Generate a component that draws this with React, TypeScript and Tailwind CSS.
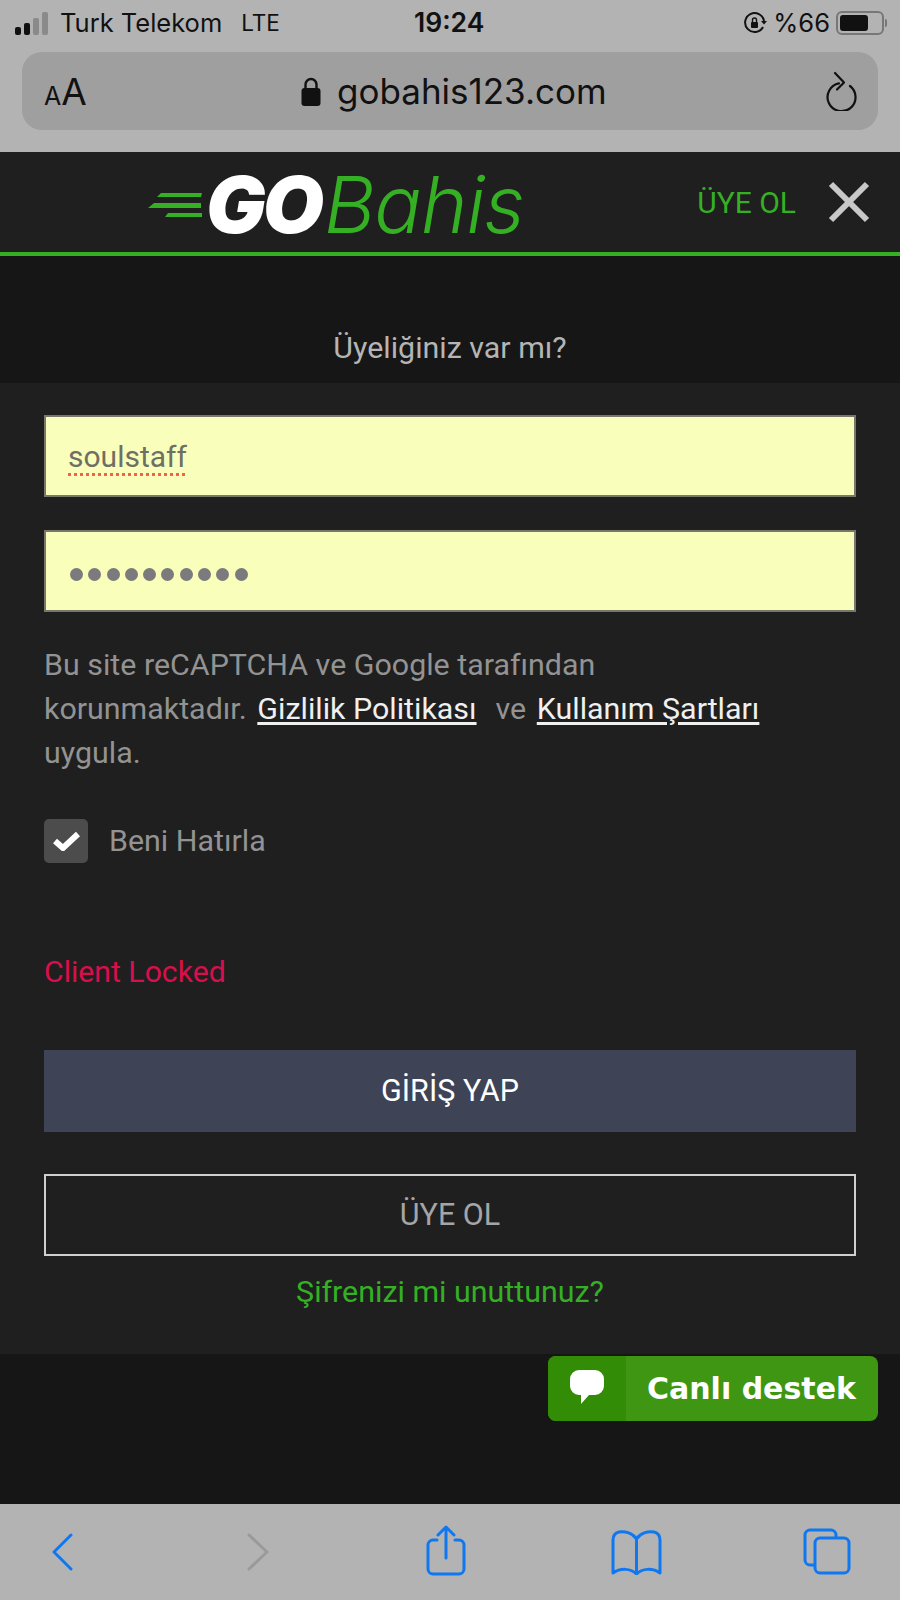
const roboto = { fontFamily: 'Roboto, sans-serif' };

function StatusBar() {
  return (
    <div className="relative flex h-[52px] items-center pb-[6px] pl-[15px] pr-[13px] text-[25.5px] text-[#111]">
      <div className="flex items-end gap-[3px]">
        <span className="h-[8px] w-[6px] rounded-[2px] bg-[#111]" />
        <span className="h-[12px] w-[6px] rounded-[2px] bg-[#111]" />
        <span className="h-[17px] w-[6px] rounded-[2px] bg-[#8a8a8a]" />
        <span className="h-[23px] w-[6px] rounded-[2px] bg-[#8a8a8a]" />
      </div>
      <span className="ml-[12px]">Turk Telekom</span>
      <span className="ml-[19px] text-[22.5px]">LTE</span>
      <span className="absolute left-[414px] text-[26.5px] font-semibold">19:24</span>
      <div className="ml-auto flex items-center gap-[6px]">
        <svg width="24" height="24" viewBox="0 0 24 24" fill="none" stroke="#111" strokeWidth="2">
          <path d="M20 16a9.5 9.5 0 1 1 1-6" />
          <path d="M18 10h6l-3 3.5z" fill="#111" stroke="none" />
          <rect x="8" y="11" width="7" height="6" rx="1" fill="#111" stroke="none" />
          <path d="M9.5 11V9a2 2 0 0 1 4 0v2" strokeWidth="1.4" />
        </svg>
        <span>%66</span>
        <div className="flex items-center">
          <div className="flex h-[24px] w-[48px] items-center rounded-[6px] border-2 border-[#777] p-[2px]">
            <div className="h-full w-[28px] rounded-[3px] bg-[#111]" />
          </div>
          <div className="ml-[1px] h-[8px] w-[2px] rounded-r bg-[#777]" />
        </div>
      </div>
    </div>
  );
}

function UrlBar() {
  return (
    <div className="mx-[22px] flex h-[78px] items-center rounded-[20px] bg-[#9f9f9f] pl-[22px] pr-[21px] text-[#111]">
      <span className="flex w-[257px] items-baseline text-[37px] leading-none">
        <span className="text-[25px]">A</span>A
      </span>
      <svg width="20" height="29" viewBox="0 0 20 29" fill="none">
        <path d="M4.5 13V7.5a5.5 5.5 0 0 1 11 0V13" stroke="#111" strokeWidth="2.4" />
        <rect x="0.5" y="11" width="19" height="18" rx="3" fill="#111" />
      </svg>
      <span className="ml-[16px] text-[35px] leading-none">gobahis123.com</span>
      <svg className="ml-auto" width="34" height="40" viewBox="0 0 34 40" fill="none" stroke="#111" strokeWidth="2.2" strokeLinecap="round" strokeLinejoin="round">
        <path d="M27 15a14 14 0 1 1-11-2.6" />
        <path d="M12 2l9 9.5-7 7" />
      </svg>
    </div>
  );
}

function Logo() {
  return (
    <div className="mt-[5px] flex items-center">
      <svg width="55" height="26" viewBox="0 0 55 26" className="mt-[2px]">
        <path d="M13 0h41l-1 4H9z" fill="#35b024" />
        <path d="M6 10h47v5H0z" fill="#35b024" />
        <path d="M20 20h34v4H17z" fill="#35b024" />
      </svg>
      <span className="ml-[3px] text-[79px] font-black italic leading-none tracking-[-3px] text-white">
        GO
      </span>
      <span className="ml-[3px] text-[79px] font-light italic leading-none tracking-[-1px] text-[#35b024]">
        Bahis
      </span>
    </div>
  );
}

export default function App() {
  return (
    <div className="relative flex h-[1600px] w-[900px] flex-col overflow-hidden bg-[#b3b3b3]" style={{ fontFamily: 'Inter, sans-serif' }}>
      <StatusBar />
      <UrlBar />

      <header className="mt-[22px] flex h-[104px] items-center border-b-4 border-[#35b024] bg-[#1f1f1f] pl-[148px] pr-[30px]">
        <Logo />
        <span className="ml-auto text-[30px] text-[#35b024]" style={roboto}>ÜYE OL</span>
        <svg className="ml-[32px]" width="42" height="42" viewBox="0 0 42 42" stroke="#c8c8c8" strokeWidth="6">
          <path d="M3 3l36 36M39 3L3 39" />
        </svg>
      </header>

      <div className="flex h-[127px] items-end justify-center bg-[#161616] pb-[12px] text-[30.4px] text-[#b5b5b5]" style={roboto}>
        Üyeliğiniz var mı?
      </div>

      <main className="flex h-[971px] flex-col bg-[#1f1f1f] px-[44px] pt-[32px]" style={roboto}>
        <div className="flex h-[82px] items-center border-2 border-[#77776b] bg-[#f9ffbb] pl-[22px] text-[30px] text-[#6f6f66]">
          <span className="underline decoration-[#f4614a] decoration-dotted decoration-[3px] underline-offset-[6px]">soulstaff</span>
        </div>
        <div className="mt-[33px] flex h-[82px] items-center gap-[5.3px] border-2 border-[#77776b] bg-[#f9ffbb] pl-[24px] pt-[6px]">
          {Array.from({ length: 10 }).map((_, i) => (
            <span key={i} className="h-[13px] w-[13px] rounded-full bg-[#7b7a7c]" />
          ))}
        </div>

        <p className="mt-[31px] w-[800px] text-[30.4px] leading-[44px] text-[#939393]">
          Bu site reCAPTCHA ve Google tarafından
          <br />
          korunmaktadır. <a className="ml-[3px] text-[#f0f0f0] underline underline-offset-3">Gizlilik Politikası</a>
          <span className="ml-[19px]">ve</span> <a className="ml-[3px] text-[#f0f0f0] underline underline-offset-3">Kullanım Şartları</a>
          <br />
          uygula.
        </p>

        <div className="mt-[43px] flex items-center">
          <div className="flex h-[44px] w-[44px] items-center justify-center rounded-[5px] bg-[#4c4c4c]">
            <svg width="27" height="20" viewBox="0 0 27 20" fill="none" stroke="white" strokeWidth="6">
              <path d="M2 10l8 7L25 3" />
            </svg>
          </div>
          <span className="ml-[21px] text-[30.4px] text-[#939393]">Beni Hatırla</span>
        </div>

        <p className="mt-[86px] text-[30.2px] leading-[44px] text-[#d80f4d]">Client Locked</p>

        <button className="mt-[56px] h-[82px] w-full bg-[#3e4355] text-[30.5px] text-white">GİRİŞ YAP</button>
        <button className="mt-[42px] h-[82px] w-full border-2 border-[#cfcfcf] text-[30.5px] text-[#a5a5a5]">ÜYE OL</button>
        <p className="mt-[16px] text-center text-[30.4px] leading-[40px] text-[#35b024]">Şifrenizi mi unuttunuz?</p>
      </main>

      <div className="h-[150px] bg-[#161616]" />

      <footer className="flex h-[96px] items-start bg-[#b3b3b3]">
        <svg className="ml-[52px] mt-[29px]" width="21" height="38" viewBox="0 0 21 38" fill="none" stroke="#0f78f0" strokeWidth="3" strokeLinecap="round" strokeLinejoin="round">
          <path d="M19 2L2 19l17 17" />
        </svg>
        <svg className="ml-[174px] mt-[29px]" width="22" height="38" viewBox="0 0 22 38" fill="none" stroke="#9a9a9a" strokeWidth="3" strokeLinecap="round" strokeLinejoin="round">
          <path d="M2 2l18 17L2 36" />
        </svg>
        <svg className="ml-[157px] mt-[21px]" width="40" height="51" viewBox="0 0 40 51" fill="none" stroke="#0f78f0" strokeWidth="3" strokeLinecap="round" strokeLinejoin="round">
          <path d="M11 15H7a5 5 0 0 0-5 5v24a5 5 0 0 0 5 5h26a5 5 0 0 0 5-5V20a5 5 0 0 0-5-5h-4" />
          <path d="M20 33V2M12 10l8-8 8 8" />
        </svg>
        <svg className="ml-[145px] mt-[26px]" width="51" height="45" viewBox="0 0 51 45" fill="none" stroke="#0f78f0" strokeWidth="3" strokeLinecap="round" strokeLinejoin="round">
          <path d="M25.5 9C22 3 14 1 8 2 4 3 2 6 2 10v33c7-5 18-5 23.5 1C31 38 42 38 49 43V10c0-4-2-7-6-8-6-1-14 1-17.5 7z" />
          <path d="M25.5 9v35" />
        </svg>
        <svg className="ml-[141px] mt-[24px]" width="48" height="47" viewBox="0 0 48 47" fill="none" stroke="#0f78f0" strokeWidth="3" strokeLinejoin="round">
          <path d="M11 37H7a5 5 0 0 1-5-5V7a5 5 0 0 1 5-5h21a5 5 0 0 1 5 5v3" />
          <rect x="12" y="10" width="34" height="35" rx="5" />
        </svg>
      </footer>

      {/* chat widget sits over the page */}
      <div className="absolute left-[548px] top-[1356px] flex h-[65px] w-[330px] overflow-hidden rounded-[8px] bg-[#3e9613] text-white">
        <div className="flex w-[78px] items-center justify-center bg-[#328c06]">
          <svg width="36" height="36" viewBox="0 0 36 36" fill="white" className="mb-[3px]">
            <path d="M10 1h16a9 9 0 0 1 9 9v7a9 9 0 0 1-9 9h-6l-8 9v-9h-2a9 9 0 0 1-9-9v-7a9 9 0 0 1 9-9z" />
          </svg>
        </div>
        <span className="ml-[21px] self-center text-[30px] font-bold" style={{ fontFamily: '"DejaVu Sans", sans-serif' }}>Canlı destek</span>
      </div>
    </div>
  );
}
